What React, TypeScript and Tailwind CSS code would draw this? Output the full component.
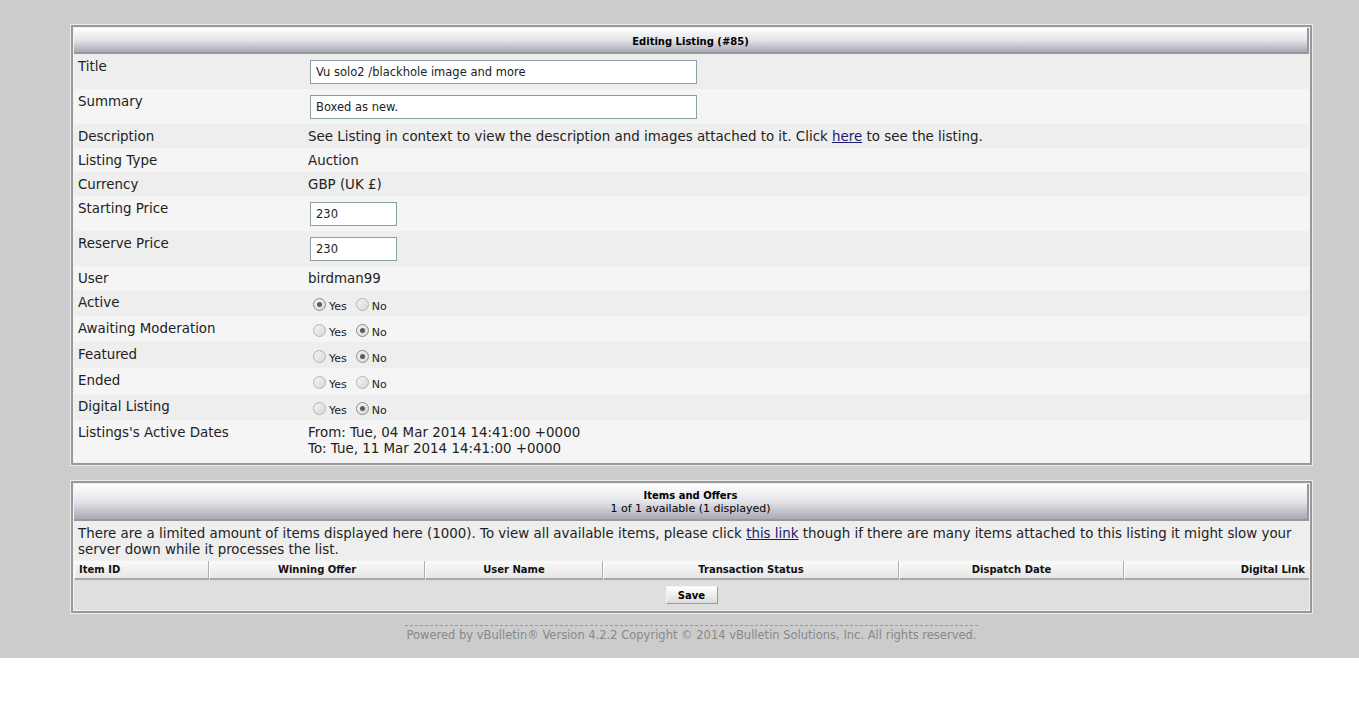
import React from "react";

const font = { fontFamily: '"DejaVu Sans", Verdana, sans-serif' };

type Row = {
  label: string;
  kind: "input" | "text" | "radio" | "dates" | "desc";
  value?: string;
  width?: string;
  yes?: boolean;
};

const rows: Row[] = [
  { label: "Title", kind: "input", value: "Vu solo2 /blackhole image and more", width: "w-[387px]" },
  { label: "Summary", kind: "input", value: "Boxed as new.", width: "w-[387px]" },
  { label: "Description", kind: "desc" },
  { label: "Listing Type", kind: "text", value: "Auction" },
  { label: "Currency", kind: "text", value: "GBP (UK £)" },
  { label: "Starting Price", kind: "input", value: "230", width: "w-[87px]" },
  { label: "Reserve Price", kind: "input", value: "230", width: "w-[87px]" },
  { label: "User", kind: "text", value: "birdman99" },
  { label: "Active", kind: "radio", yes: true },
  { label: "Awaiting Moderation", kind: "radio", yes: false },
  { label: "Featured", kind: "radio", yes: false },
  { label: "Ended", kind: "radio" },
  { label: "Digital Listing", kind: "radio", yes: false },
  { label: "Listings's Active Dates", kind: "dates" },
];

function Radio({ checked }: { checked: boolean }) {
  return (
    <span
      className={`w-[13px] h-[13px] mb-[2px] shrink-0 rounded-full border flex items-center justify-center bg-linear-to-br from-[#f4f4f4] to-[#d8d8d8] ${
        checked ? "border-[#8a8a8a]" : "border-[#b4b4b4]"
      }`}
    >
      {checked && <span className="w-[5px] h-[5px] rounded-full bg-[#5a5a5a]" />}
    </span>
  );
}

function YesNo({ yes }: { yes?: boolean }) {
  return (
    <div className="flex items-end h-[18px] text-[11px] leading-[13px] text-[#222]">
      <span className="ml-[5px]" />
      <Radio checked={yes === true} />
      <span className="ml-[3px]">Yes</span>
      <span className="ml-[9px]" />
      <Radio checked={yes === false} />
      <span className="ml-[3px]">No</span>
    </div>
  );
}

function Box({ children }: { children: React.ReactNode }) {
  return (
    <div className="ml-[70px] w-[1243px] border border-[#ececec]">
      <div className="border-2 border-[#989898] p-px bg-[#f2f2f2]">{children}</div>
    </div>
  );
}

function Header({ children }: { children: React.ReactNode }) {
  return (
    <div className="bg-linear-to-b from-white via-[#e4e4ea] to-[#a9a9b6] border-r-2 border-b-2 border-[#999] text-center text-[11px] leading-[13px] text-black">
      {children}
    </div>
  );
}

export default function App() {
  return (
    <div className="min-h-screen bg-white" style={font}>
      <div className="bg-[#cccccc] pt-[24px] pb-[16px]">
        <Box>
          <Header>
            <div className="font-bold text-[10px] pt-[7px] pb-[4px]">Editing Listing (#85)</div>
          </Header>
          {rows.map((r, i) => (
            <div
              key={r.label}
              className={`flex text-[13.4px] leading-[16px] text-[#222] ${i % 2 === 0 ? "bg-[#eeeeee]" : "bg-[#f5f5f5]"}`}
            >
              <div className="w-[234px] shrink-0 pl-[4px] pt-[5px] pb-[3px]">{r.label}</div>
              <div className={`flex-1 pt-[5px] pb-[3px] ${r.kind === "dates" ? "pb-[5px]" : ""}`}>
                {r.kind === "input" && (
                  <div
                    className={`${r.width} h-[24px] mt-[1px] mb-[2px] ml-[2px] border border-[#8c9ea6] bg-white px-[5px] text-[11.5px] leading-[22px] text-[#222]`}
                  >
                    {r.value}
                  </div>
                )}
                {r.kind === "text" && <span>{r.value}</span>}
                {r.kind === "desc" && (
                  <span>
                    See Listing in context to view the description and images attached to it. Click{" "}
                    <a className="underline text-[#1a1a6e]">here</a> to see the listing.
                  </span>
                )}
                {r.kind === "radio" && <YesNo yes={r.yes} />}
                {r.kind === "dates" && (
                  <div>
                    <div>From: Tue, 04 Mar 2014 14:41:00 +0000</div>
                    <div>To: Tue, 11 Mar 2014 14:41:00 +0000</div>
                  </div>
                )}
              </div>
            </div>
          ))}
        </Box>

        <div className="h-[14px]" />

        <Box>
          <Header>
            <div className="pt-[5px] pb-[4px]">
              <div className="font-bold text-[10px]">Items and Offers</div>
              <div>1 of 1 available (1 displayed)</div>
            </div>
          </Header>
          <div className="bg-[#eeeeee] px-[4px] pt-[5px] pb-[2px] text-[13.4px] leading-[16px] text-[#222]">
            There are a limited amount of items displayed here (1000). To view all available items, please click{" "}
            <a className="underline text-[#1a1a6e]">this link</a> though if there are many items attached to this
            listing it might slow your server down while it processes the list.
          </div>
          <div className="grid grid-cols-[135px_216px_178px_296px_225px_1fr] text-[10px] leading-[17px] font-bold text-[#111] mt-px">
            {[
              ["Item ID", "text-left"],
              ["Winning Offer", "text-center"],
              ["User Name", "text-center"],
              ["Transaction Status", "text-center"],
              ["Dispatch Date", "text-center"],
              ["Digital Link", "text-right"],
            ].map(([t, a], i) => (
              <div
                key={t}
                className={`${a} px-[4px] bg-linear-to-b from-[#fafafa] to-[#e6e6e6] border-b-2 border-[#a8a8a8] border-l border-l-white ${
                  i < 5 ? "border-r border-r-[#b0b0b0]" : ""
                }`}
              >
                {t}
              </div>
            ))}
          </div>
          <div className="bg-[#dfdfdf] h-[30px] flex justify-center items-start pt-[6px]">
            <button className="w-[52px] h-[18px] bg-linear-to-b from-white to-[#dcdcdc] border border-[#f4f4f4] border-r-[#999] border-b-[#999] text-[10px] leading-[15px] font-bold text-black">
              Save
            </button>
          </div>
        </Box>

        <div className="flex justify-center mt-[11px] ml-[24px]">
          <div className="border-t border-dashed border-[#999] pt-[2px] text-[11.5px] leading-[14px] text-[#888] px-[1px]">
            Powered by vBulletin® Version 4.2.2 Copyright © 2014 vBulletin Solutions, Inc. All rights reserved.
          </div>
        </div>
      </div>
    </div>
  );
}
